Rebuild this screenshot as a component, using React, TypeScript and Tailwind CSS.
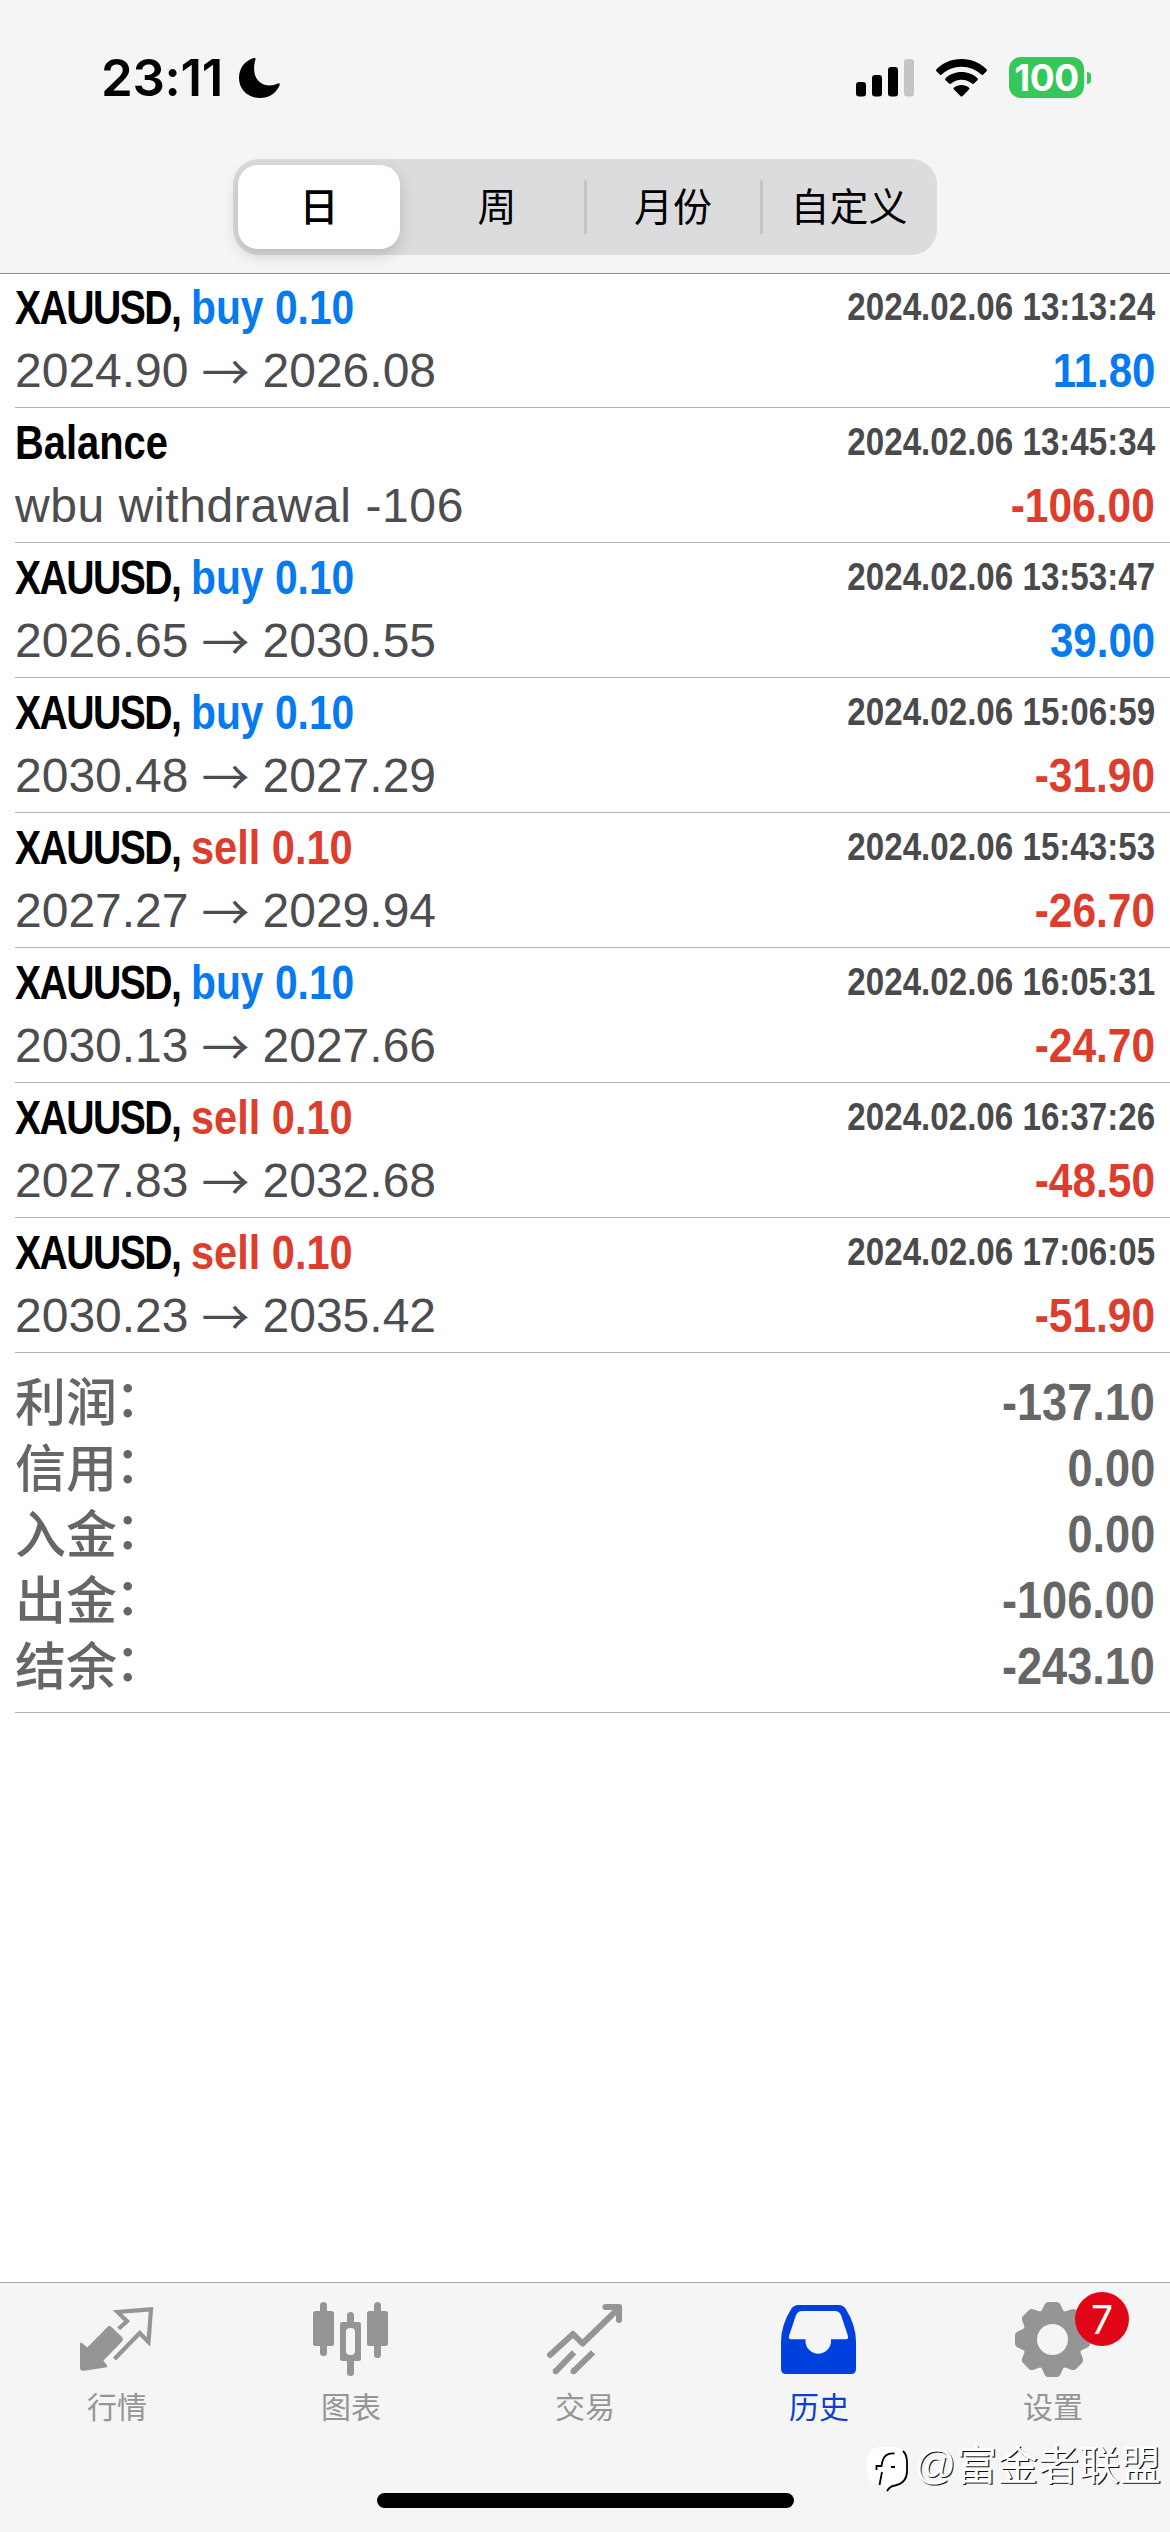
import type { ReactNode } from "react";

type Deal = {
  title: string;
  side?: "buy" | "sell";
  detail: string;
  to?: string;
  time: string;
  value: string;
};

const deals: Deal[] = [
  { title: "XAUUSD,", side: "buy", detail: "2024.90", to: "2026.08", time: "2024.02.06 13:13:24", value: "11.80" },
  { title: "Balance", detail: "wbu withdrawal -106", time: "2024.02.06 13:45:34", value: "-106.00" },
  { title: "XAUUSD,", side: "buy", detail: "2026.65", to: "2030.55", time: "2024.02.06 13:53:47", value: "39.00" },
  { title: "XAUUSD,", side: "buy", detail: "2030.48", to: "2027.29", time: "2024.02.06 15:06:59", value: "-31.90" },
  { title: "XAUUSD,", side: "sell", detail: "2027.27", to: "2029.94", time: "2024.02.06 15:43:53", value: "-26.70" },
  { title: "XAUUSD,", side: "buy", detail: "2030.13", to: "2027.66", time: "2024.02.06 16:05:31", value: "-24.70" },
  { title: "XAUUSD,", side: "sell", detail: "2027.83", to: "2032.68", time: "2024.02.06 16:37:26", value: "-48.50" },
  { title: "XAUUSD,", side: "sell", detail: "2030.23", to: "2035.42", time: "2024.02.06 17:06:05", value: "-51.90" },
];

const totals = [
  { label: "利润", value: "-137.10" },
  { label: "信用", value: "0.00" },
  { label: "入金", value: "0.00" },
  { label: "出金", value: "-106.00" },
  { label: "结余", value: "-243.10" },
];

const periods = ["日", "周", "月份", "自定义"];

function StatusBar() {
  return (
    <div className="flex h-[159px] items-start justify-between pt-[57px] pr-[79px] pl-[101px]">
      <div className="flex h-[41px] items-center">
        <span className="w-[138px] font-['Inter'] text-[51px] leading-none font-semibold tracking-[-0.3px]">
          23:11
        </span>
        <svg width="41" height="40" viewBox="0 0 41 40">
          <path d="M16.500 1.500C14.500 8 14 17 19.500 23C25 28.500 33 28.500 39 25.500C40.500 25 41 26 40.500 27.500C37 35.500 30 40 21 40C9 40 0 31.500 0 20C0 10.500 5.500 3 14 0.300C16 -0.300 17 0.300 16.500 1.500Z" />
        </svg>
      </div>
      <div className="flex h-[41px] items-center">
        <svg width="58" height="38" viewBox="0 0 58 38">
          <rect y="23" width="10" height="14.500" rx="3" />
          <rect x="16" y="16" width="10" height="21.500" rx="3" />
          <rect x="32" y="8" width="10" height="29.500" rx="3" />
          <rect x="48" y="0" width="10" height="37.500" rx="3" fill="#c5c5c6" />
        </svg>
        <svg className="ml-[22px]" width="51" height="38" viewBox="0 0 51 38">
          <path d="M25.500 0C35.500 0 44.500 3.800 50.500 10.200C51.200 11 51.100 11.700 50.500 12.300L47.300 15.500C46.600 16.200 45.900 16.100 45.200 15.500C40 10.700 33.200 7.800 25.500 7.800S11 10.700 5.800 15.500C5.100 16.100 4.400 16.200 3.700 15.500L0.500 12.300C-0.100 11.700 -0.200 11 0.500 10.200C6.500 3.800 15.500 0 25.500 0Z" />
          <path d="M25.500 13C31.800 13 37.300 15.300 41.400 19.200C42.100 19.900 42.100 20.600 41.400 21.300L38 24.500C37.300 25.200 36.600 25.100 35.900 24.500C33.100 22.100 29.500 20.700 25.500 20.700S17.900 22.100 15.100 24.500C14.400 25.100 13.700 25.200 13 24.500L9.600 21.300C8.900 20.600 8.900 19.900 9.600 19.200C13.700 15.300 19.200 13 25.500 13Z" />
          <path d="M25.500 26C28.400 26 31 26.900 32.900 28.500C33.700 29.200 33.700 29.800 33 30.500L26.600 37C25.800 37.700 25.200 37.700 24.400 37L18 30.500C17.300 29.800 17.300 29.200 18.100 28.500C20 26.900 22.600 26 25.500 26Z" />
        </svg>
        <div className="ml-[22px] flex h-[41px] w-[75px] items-center justify-center rounded-[12px] bg-[#34c759]">
          <span className="font-['Inter'] text-[37px] leading-none font-bold tracking-[-0.5px] text-white">100</span>
        </div>
        <span className="ml-[3px] h-[12px] w-[4px] rounded-r-full bg-[#34c759]" />
      </div>
    </div>
  );
}

function PeriodTabs() {
  return (
    <div className="mx-auto flex h-[96px] w-[704px] rounded-[26px] bg-[#dcdcde] font-['Noto_Sans_CJK_SC',sans-serif] text-[39px] leading-none">
      {periods.map((period, i) => (
        <div key={period} className="relative flex w-[176px] items-center justify-center">
          {i === 0 ? (
            <div className="mr-[4px] flex h-[84px] w-[162px] items-center justify-center rounded-[20px] bg-white pb-[6px] font-medium shadow-[0_6px_16px_rgba(0,0,0,0.16)]">
              {period}
            </div>
          ) : (
            <span className="pb-[6px]">{period}</span>
          )}
          {i > 1 && <span className="absolute top-[21px] left-[-1px] h-[54px] w-[3px] rounded-full bg-[#c4c4c7]" />}
        </div>
      ))}
    </div>
  );
}

function DealRow({ deal }: { deal: Deal }) {
  const loss = deal.value.startsWith("-");
  return (
    <li className="ml-[15px] flex h-[135px] justify-between border-b border-[#b4b4b6] pt-[3px] pr-[15px] text-[48px] leading-[63px] whitespace-nowrap first:h-[134px] first:pt-[2px]">
      <div className="w-[500px]">
        <div className="flex h-[63px] font-bold">
          <div className="w-[176px]">
            <span
              className={`inline-block origin-left ${deal.side ? "scale-x-[0.815] tracking-[-1.900px]" : "scale-x-[0.83]"}`}
            >
              {deal.title}
            </span>
          </div>
          {deal.side && (
            <span
              className={`origin-left ${
                deal.side === "buy" ? "scale-x-[0.85] text-[#087af0]" : "scale-x-[0.865] text-[#dd3d2c]"
              }`}
            >
              {deal.side} 0.10
            </span>
          )}
        </div>
        {deal.to ? (
          <p className="flex h-[63px] gap-[13px] text-[#4d4d50]">
            <span>{deal.detail}</span>
            <span className="w-[48px] text-center font-['Noto_Sans_CJK_SC',sans-serif] leading-[61px]">→</span>
            <span>{deal.to}</span>
          </p>
        ) : (
          <p className="h-[63px] tracking-[0.6px] text-[#4d4d50]">{deal.detail}</p>
        )}
      </div>
      <div className="flex flex-col items-end font-bold">
        <span className="h-[63px] origin-right scale-x-[0.85] text-[39px] leading-[61px] text-[#4a4a4d]">
          {deal.time}
        </span>
        <span className={`origin-right ${loss ? "scale-x-[0.885] text-[#dd3d2c]" : "scale-x-[0.875] text-[#087af0]"}`}>
          {deal.value}
        </span>
      </div>
    </li>
  );
}

function Totals() {
  return (
    <dl className="ml-[15px] border-b border-[#b4b4b6] pt-[16px] pr-[15px] pb-[13px] text-[#666]">
      {totals.map((row) => (
        <div key={row.label} className="flex h-[66px] justify-between text-[51px]">
          <dt className="font-['Noto_Sans_CJK_SC',sans-serif] leading-[60px] font-medium">
            {row.label}
            <span className="relative -top-[4px] -left-[2px]">：</span>
          </dt>
          <dd className="origin-right scale-x-[0.885] leading-[68px] font-bold">{row.value}</dd>
        </div>
      ))}
    </dl>
  );
}

function QuotesIcon() {
  return (
    <svg width="76" height="76" viewBox="0 0 76 76" fill="none">
      <path
        d="M1 43Q1 40.500 3 42L8.300 46.500L28 26.500Q30 24 32.500 26L43 36Q45 38.300 43 40.500L24.300 59.700L27.500 63.500Q29.500 66 26.500 66.500L5 69.800Q1 70 1 67Z"
        fill="#959595"
      />
      <path d="M39.700 27.700L48 20.300L38.500 11L72 8.300L69.500 41L60.700 32L35.500 58" stroke="#959595" strokeWidth="4.200" />
    </svg>
  );
}

function ChartIcon() {
  return (
    <svg width="76" height="76" viewBox="0 0 76 76" fill="#959595">
      <rect x="7" y="1" width="7" height="54" rx="3.500" />
      <rect y="10" width="21" height="35" rx="2.500" />
      <rect x="61" y="1" width="7" height="56" rx="3.500" />
      <rect x="54" y="10" width="21" height="35" rx="2.500" />
      <rect x="34" y="11" width="7" height="64" rx="3.500" />
      <rect x="27" y="21" width="21" height="39" rx="2.500" />
      <rect x="33" y="27" width="9" height="27" rx="4" fill="#f5f5f5" />
    </svg>
  );
}

function TradeIcon() {
  return (
    <svg width="76" height="76" viewBox="0 0 76 76" fill="none" stroke="#959595" strokeWidth="6" strokeLinecap="round" strokeLinejoin="round">
      <path d="M3 54L26 33L35.500 42.500L71 8" />
      <path d="M58.500 6H72V19" />
      <path d="M8.700 70.300L27 51.300M26.500 70.300L46 51.300" strokeLinecap="butt" />
      <path d="M8.700 70.300h.01M26.500 70.300h.01" />
    </svg>
  );
}

function HistoryIcon() {
  return (
    <svg width="76" height="76" viewBox="0 0 76 76">
      <path
        d="M17 4H58Q62 4 64.500 7.500Q75 24 75 41V68Q75 73 70 73H5Q0 73 0 68V41Q0 24 10.500 7.500Q13 4 17 4Z"
        fill="#0040dd"
      />
      <path
        d="M21 10H54Q58 10 60 14L67 35Q67.500 38.300 65 38.300H50V41A12.800 12.800 0 0 1 24.500 41V38.300H10Q7.300 38.300 8 35L15 14Q17 10 21 10Z"
        fill="#f5f5f5"
      />
    </svg>
  );
}

function SettingsIcon() {
  return (
    <svg width="76" height="76" viewBox="-37.5 -38.5 76 76" fill="#959595">
      <circle r="29.500" />
      {[0, 45, 90, 135, 180, 225, 270, 315].map((angle) => (
        <path
          key={angle}
          d="M-14 -26Q-10.500 -28 -9.500 -31.500Q-7.500 -37.500 -4.500 -37.500H4.500Q7.500 -37.500 9.500 -31.500Q10.500 -28 14 -26Z"
          transform={`rotate(${angle})`}
        />
      ))}
      <circle r="15.500" fill="#f5f5f5" />
    </svg>
  );
}

const tabs: { label: string; icon: ReactNode; badge?: number; active?: boolean }[] = [
  { label: "行情", icon: <QuotesIcon /> },
  { label: "图表", icon: <ChartIcon /> },
  { label: "交易", icon: <TradeIcon /> },
  { label: "历史", icon: <HistoryIcon />, active: true },
  { label: "设置", icon: <SettingsIcon />, badge: 7 },
];

function TabBar() {
  return (
    <footer className="relative flex h-[250px] flex-col border-t border-[#a8a8aa] bg-[#f5f5f5]">
      <nav className="grid grid-cols-5 pt-[18px]">
        {tabs.map((tab) => (
          <div key={tab.label} className="flex flex-col items-center">
            <div className="relative">
              {tab.icon}
              {tab.badge && (
                <span className="absolute top-[-9px] left-[60px] flex size-[54px] items-center justify-center rounded-full bg-[#e00615] font-['Inter'] text-[39px] leading-none text-white">
                  {tab.badge}
                </span>
              )}
            </div>
            <span
              className={`mt-[11px] font-['Noto_Sans_CJK_SC',sans-serif] text-[30px] leading-[34px] ${
                tab.active ? "text-[#0a3fd0]" : "text-[#959595]"
              }`}
            >
              {tab.label}
            </span>
          </div>
        ))}
      </nav>
      <div className="mx-auto mt-auto mb-[24px] h-[15px] w-[417px] rounded-full bg-black" />
      <div className="absolute right-[9px] bottom-[38px] flex items-start">
        <svg className="mr-[3px]" width="46" height="50" viewBox="0 0 46 50" fill="none">
          <path d="M16 3H28Q42 3 42 17V27Q42 40 29 41Q24 42 21 47L19 41H15Q2 40 2 27V17Q2 3 16 3Z" fill="#fff" />
          <path d="M38 7Q42 11 42 18V27Q42 39 30 41.500Q25 42 22 47" stroke="#000" strokeWidth="1.800" />
          <path d="M29.500 9.500Q20 8.500 17.500 17L16.500 22H11.500V26M17 28L14.500 41M26 23H30" stroke="#000" strokeWidth="1.800" />
        </svg>
        <span className="flex font-['Noto_Sans_CJK_SC',sans-serif] text-[41px] leading-[37px] text-white [text-shadow:1.2px_1.2px_0_#111]">
          <span className="font-['Liberation_Sans'] leading-[42px]">@</span>
          富金者联盟
        </span>
      </div>
    </footer>
  );
}

export default function App() {
  return (
    <div className="flex h-[2532px] w-[1170px] flex-col overflow-hidden bg-white font-['Liberation_Sans'] text-black">
      <header className="h-[274px] border-b border-[#8e8e91] bg-[#f5f5f5]">
        <StatusBar />
        <PeriodTabs />
      </header>
      <main className="flex-1">
        <ul>
          {deals.map((deal) => (
            <DealRow key={deal.time} deal={deal} />
          ))}
        </ul>
        <Totals />
      </main>
      <TabBar />
    </div>
  );
}
